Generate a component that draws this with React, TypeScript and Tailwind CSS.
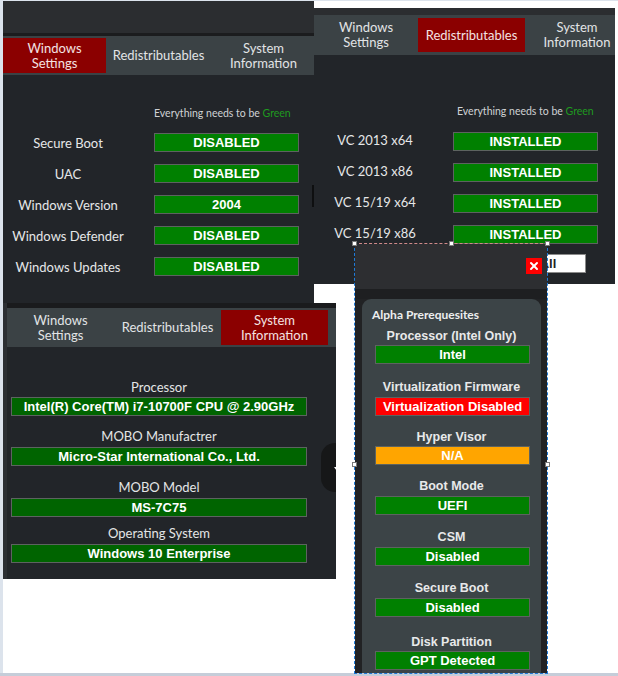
import React from 'react';
import clsx from 'clsx';
import { X } from 'lucide-react';

const seg = "font-['Lato','Noto_Sans',sans-serif]";
const arial = "font-['Liberation_Sans',Arial,sans-serif]";

type TabDef = { lines: string[]; w: string; active?: boolean };

function TabBar({ tabs, className }: { tabs: TabDef[]; className?: string }) {
  return (
    <div className={clsx('flex shrink-0 overflow-hidden bg-[#3b4245]', className)}>
      {tabs.map((t) => (
        <div
          key={t.lines.join(' ')}
          className={clsx(
            'flex shrink-0 flex-col items-center justify-center text-center text-[13px] leading-[15px]',
            seg,
            t.w,
            t.active ? 'bg-[#8b0000] text-[#f4e2e2]' : 'text-[#e2e4e6]'
          )}
        >
          {t.lines.map((l) => (
            <span key={l}>{l}</span>
          ))}
        </div>
      ))}
    </div>
  );
}

function Pill({ text, className }: { text: string; className?: string }) {
  return (
    <div
      className={clsx(
        'flex h-[19px] shrink-0 items-center justify-center border border-[#5d6360] font-bold leading-none text-white',
        arial,
        className
      )}
    >
      {text}
    </div>
  );
}

function Hint({ className }: { className?: string }) {
  return (
    <p className={clsx('text-[10.5px] leading-[14px] text-[#cfd2d4]', seg, className)}>
      Everything needs to be <span className="text-[#1f9a1f]">Green</span>
    </p>
  );
}

const settings = [
  ['Secure Boot', 'DISABLED'],
  ['UAC', 'DISABLED'],
  ['Windows Version', '2004'],
  ['Windows Defender', 'DISABLED'],
  ['Windows Updates', 'DISABLED'],
];

const redists = ['VC 2013 x64', 'VC 2013 x86', 'VC 15/19 x64', 'VC 15/19 x86'];

const sysInfo = [
  { label: 'Processor', value: 'Intel(R) Core(TM) i7-10700F CPU @ 2.90GHz', lm: 'mt-[33px]', bm: 'mt-[3px]' },
  { label: 'MOBO Manufactrer', value: 'Micro-Star International Co., Ltd.', lm: 'mt-[13px]', bm: 'mt-[4px]' },
  { label: 'MOBO Model', value: 'MS-7C75', lm: 'mt-[14px]', bm: 'mt-[4px]' },
  { label: 'Operating System', value: 'Windows 10 Enterprise', lm: 'mt-[9px]', bm: 'mt-[4px]' },
];

const prereqs = [
  { label: 'Processor (Intel Only)', value: 'Intel', color: 'bg-[#008000]', lm: 'mt-[7px]', bm: 'mt-[2px]' },
  { label: 'Virtualization Firmware', value: 'Virtualization Disabled', color: 'bg-[#ff0000]', lm: 'mt-[16px]', bm: 'mt-[3px]' },
  { label: 'Hyper Visor', value: 'N/A', color: 'bg-[#ffa500]', lm: 'mt-[14px]', bm: 'mt-[2px]' },
  { label: 'Boot Mode', value: 'UEFI', color: 'bg-[#008000]', lm: 'mt-[14px]', bm: 'mt-[3px]' },
  { label: 'CSM', value: 'Disabled', color: 'bg-[#008000]', lm: 'mt-[15px]', bm: 'mt-[3px]' },
  { label: 'Secure Boot', value: 'Disabled', color: 'bg-[#008000]', lm: 'mt-[15px]', bm: 'mt-[3px]' },
  { label: 'Disk Partition', value: 'GPT Detected', color: 'bg-[#008000]', lm: 'mt-[18px]', bm: 'mt-[2px]' },
];

function SettingsWindow() {
  return (
    <div className="absolute left-[3px] top-[1px] flex h-[310px] w-[311px] flex-col bg-[#222529]">
      <div className="h-[32px] shrink-0 bg-[#2b2d30]" />
      <div className="h-[3px] shrink-0 bg-[#1b1c1e]" />
      <TabBar
        className="h-[39px] py-[2px]"
        tabs={[
          { lines: ['Windows', 'Settings'], w: 'w-[103px]', active: true },
          { lines: ['Redistributables'], w: 'w-[105px]' },
          { lines: ['System', 'Information'], w: 'w-[105px]' },
        ]}
      />
      <div className="relative flex flex-1 flex-col">
        <Hint className="mt-[31px] pl-[151px]" />
        <div className="mt-[13px] flex flex-col gap-[12px]">
          {settings.map(([label, value]) => (
            <div key={label} className="flex items-center">
              <span className={clsx('w-[130px] text-center text-[13px] leading-[14px] text-[#e6e7e8]', seg)}>{label}</span>
              <Pill text={value} className="ml-[21px] w-[145px] bg-[#008000] text-[13px]" />
            </div>
          ))}
        </div>
        <div className="absolute right-0 top-[110px] h-[22px] w-[2px] bg-[#0e0f10]" />
      </div>
    </div>
  );
}

function RedistWindow() {
  return (
    <div className="absolute left-[314px] top-[8px] flex h-[276px] w-[301px] flex-col overflow-hidden bg-[#222529]">
      <div className="h-[7px] shrink-0 bg-[#2b2d30]" />
      <TabBar
        className="h-[40px] py-[3px]"
        tabs={[
          { lines: ['Windows', 'Settings'], w: 'w-[104px]' },
          { lines: ['Redistributables'], w: 'w-[107px]', active: true },
          { lines: ['System', 'Information'], w: 'w-[104px]' },
        ]}
      />
      <Hint className="mt-[49px] pl-[143px]" />
      <div className="mt-[14px] flex flex-col gap-[12px]">
        {redists.map((label) => (
          <div key={label} className="flex items-center">
            <span className={clsx('mb-[4px] w-[122px] text-center text-[13px] leading-[14px] text-[#e6e7e8]', seg)}>{label}</span>
            <Pill text="INSTALLED" className="ml-[17px] w-[145px] bg-[#008000] text-[13px]" />
          </div>
        ))}
      </div>
      <button
        className={clsx(
          'ml-[156px] mt-[10px] h-[19px] w-[116px] border border-[#8a8a8a] bg-white pl-[28px] text-left text-[13px] font-bold leading-none text-[#222]',
          arial
        )}
      >
        Install All
      </button>
    </div>
  );
}

function SystemWindow() {
  return (
    <div className="absolute left-[3px] top-[303px] flex h-[276px] w-[333px] flex-col overflow-hidden border-l-[4px] border-[#2c2f33] bg-[#222529]">
      <div className="h-[5px] shrink-0 bg-[#1a1b1d]" />
      <TabBar
        className="h-[39px] py-[2px]"
        tabs={[
          { lines: ['Windows', 'Settings'], w: 'w-[107px]' },
          { lines: ['Redistributables'], w: 'w-[107px]' },
          { lines: ['System', 'Information'], w: 'w-[107px]', active: true },
        ]}
      />
      <div className="ml-[4px] flex w-[296px] flex-col">
        {sysInfo.map((row) => (
          <React.Fragment key={row.label}>
            <span className={clsx('text-center text-[13px] leading-[14px] text-[#e4e5e6]', seg, row.lm)}>{row.label}</span>
            <Pill text={row.value} className={clsx('w-full bg-[#006400] text-[13px]', row.bm)} />
          </React.Fragment>
        ))}
      </div>
      <div className="absolute left-[314px] top-[140px] h-[49px] w-[30px] rounded-[14px] bg-[#161718]">
        <svg className="absolute left-[13px] top-[24px]" width="6" height="4" viewBox="0 0 6 4">
          <path d="M0 0H6L3 4Z" fill="#fff" />
        </svg>
      </div>
    </div>
  );
}

function PrereqWindow() {
  return (
    <div className="absolute left-[354px] top-[243px] flex h-[431px] w-[194px] flex-col border border-dashed border-[#1f7bd8] border-t-[#d08a8a]">
      <div className="flex h-[45px] shrink-0 items-start justify-end bg-[#2d2e31] pr-[5px] pt-[14px]">
        <div className="flex h-[16px] w-[16px] items-center justify-center bg-[#ff0000]">
          <X className="h-[12px] w-[12px] text-white" strokeWidth={4} />
        </div>
      </div>
      <div className="h-[10px] shrink-0 bg-[#1e1f21]" />
      <div className="flex flex-1 bg-[#212224] pl-[7px] pr-[6px]">
        <div className="flex flex-1 flex-col rounded-t-[9px] bg-[#3c4447]">
          <span className={clsx('mt-[9px] pl-[10px] text-[12px] font-bold leading-[14px] text-[#eceeef]', seg)}>
            Alpha Prerequesites
          </span>
          {prereqs.map((p) => (
            <React.Fragment key={p.label}>
              <span className={clsx('text-center text-[12.5px] font-bold leading-[14px] text-[#e8e9ea]', arial, p.lm)}>{p.label}</span>
              <Pill text={p.value} className={clsx('ml-[13px] w-[155px] text-[13px]', p.color, p.bm)} />
            </React.Fragment>
          ))}
        </div>
      </div>
    </div>
  );
}

function Handle({ className }: { className: string }) {
  return <div className={clsx('absolute h-[5px] w-[5px] border border-[#7a7a7a] bg-white', className)} />;
}

export default function App() {
  return (
    <div className="relative h-[676px] w-[618px] overflow-hidden bg-white">
      <div className="absolute left-0 top-0 h-[1px] w-full bg-[#dce3ec]" />
      <div className="absolute left-0 top-0 h-full w-[3px] bg-[#dce3ec]" />
      <div className="absolute bottom-0 left-0 h-[3px] w-full bg-[#c5cdd9]" />
      <SettingsWindow />
      <SystemWindow />
      <RedistWindow />
      <PrereqWindow />
      <Handle className="left-[352px] top-[241px]" />
      <Handle className="left-[449px] top-[241px]" />
      <Handle className="left-[545px] top-[241px]" />
      <Handle className="left-[352px] top-[462px]" />
      <Handle className="left-[545px] top-[462px]" />
    </div>
  );
}
